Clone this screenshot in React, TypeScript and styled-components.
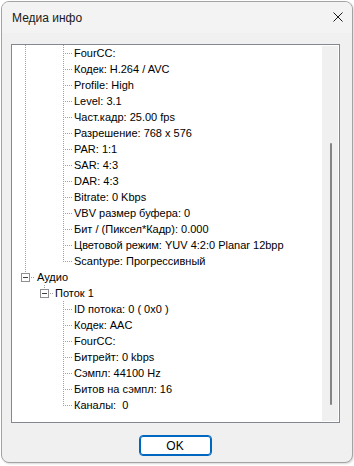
import styled, { createGlobalStyle } from 'styled-components';

type Guide = 'none' | 'line' | 'tee' | 'elbow' | 'expand';

type Row = {
  guides: Guide[];
  label: string;
};

const videoItems = [
  'FourCC:',
  'Кодек: H.264 / AVC',
  'Profile: High',
  'Level: 3.1',
  'Част.кадр: 25.00 fps',
  'Разрешение: 768 x 576',
  'PAR: 1:1',
  'SAR: 4:3',
  'DAR: 4:3',
  'Bitrate: 0 Kbps',
  'VBV размер буфера: 0',
  'Бит / (Пиксел*Кадр): 0.000',
  'Цветовой режим: YUV 4:2:0 Planar 12bpp',
  'Scantype: Прогрессивный',
];

const audioItems = [
  'ID потока: 0 ( 0x0 )',
  'Кодек: AAC',
  'FourCC:',
  'Битрейт: 0 kbps',
  'Сэмпл: 44100 Hz',
  'Битов на сэмпл: 16',
  'Каналы:  0',
];

const rows: Row[] = [
  ...videoItems.map((label, i) => ({
    guides: ['line', 'none', i < videoItems.length - 1 ? 'tee' : 'elbow'] as Guide[],
    label,
  })),
  { guides: ['expand'], label: 'Аудио' },
  { guides: ['none', 'expand'], label: 'Поток 1' },
  ...audioItems.map((label, i) => ({
    guides: ['none', 'none', i < audioItems.length - 1 ? 'tee' : 'elbow'] as Guide[],
    label,
  })),
];

const DOT = '#a0a0a0';

const GuideCell = ({ kind }: { kind: Guide }) => (
  <GuideSvg width="19" height="16" viewBox="0 0 19 16">
    {(kind === 'line' || kind === 'tee') && (
      <line x1="9.5" y1="0" x2="9.5" y2="16" stroke={DOT} strokeDasharray="1 1" />
    )}
    {kind === 'elbow' && (
      <line x1="9.5" y1="0" x2="9.5" y2="9" stroke={DOT} strokeDasharray="1 1" />
    )}
    {(kind === 'tee' || kind === 'elbow') && (
      <line x1="11" y1="8.5" x2="19" y2="8.5" stroke={DOT} strokeDasharray="1 1" />
    )}
    {kind === 'expand' && (
      <>
        <line x1="9.5" y1="0" x2="9.5" y2="4" stroke={DOT} strokeDasharray="1 1" />
        <line x1="15" y1="8.5" x2="19" y2="8.5" stroke={DOT} strokeDasharray="1 1" />
        <rect x="5.5" y="4.5" width="8" height="8" fill="#ffffff" stroke="#8f8f8f" />
        <line x1="7" y1="8.5" x2="12" y2="8.5" stroke="#404040" />
      </>
    )}
  </GuideSvg>
);

export default function App() {
  return (
    <>
      <GlobalStyle />
      <Screen>
        <Window>
          <TitleBar>
            <Title>Медиа инфо</Title>
            <CloseButton>
              <svg width="10" height="10" viewBox="0 0 10 10">
                <path d="M0.5 0.5 L9.5 9.5 M9.5 0.5 L0.5 9.5" stroke="#1a1a1a" strokeWidth="1" />
              </svg>
            </CloseButton>
          </TitleBar>
          <Body>
            <TreeBox>
              <TreeList>
                {rows.map((row, i) => (
                  <TreeRow key={i}>
                    {row.guides.map((g, j) => (
                      <GuideCell key={j} kind={g} />
                    ))}
                    <Label $root={row.guides.length === 1}>{row.label}</Label>
                  </TreeRow>
                ))}
              </TreeList>
              <ScrollTrack $before={97} $after={16}>
                <Thumb />
              </ScrollTrack>
            </TreeBox>
            <ButtonRow>
              <OkButton>OK</OkButton>
            </ButtonRow>
          </Body>
        </Window>
      </Screen>
    </>
  );
}

const GlobalStyle = createGlobalStyle`
  html, body {
    margin: 0;
    padding: 0;
    background: #ffffff;
  }
`;

const Screen = styled.div`
  width: 354px;
  height: 466px;
  padding: 1px 0 0 1px;
  box-sizing: border-box;
`;

const Window = styled.div`
  width: 352px;
  height: 462px;
  box-sizing: border-box;
  border: 1px solid #a3a3a3;
  border-radius: 8px;
  background: #f0f0f0;
  display: flex;
  flex-direction: column;
  overflow: hidden;
  box-shadow: 1px 1px 2px rgba(0, 0, 0, 0.15);
`;

const TitleBar = styled.div`
  height: 31px;
  flex: none;
  display: flex;
  align-items: center;
  justify-content: space-between;
  padding: 0 9px 0 10px;
  background: #f3f3f3;
`;

const Title = styled.span`
  font-family: 'Liberation Sans', Arial, sans-serif;
  font-size: 12px;
  color: #1a1a1a;
`;

const CloseButton = styled.div`
  width: 10px;
  height: 10px;
  display: flex;
  margin-top: -1px;
`;

const Body = styled.div`
  flex: 1;
  display: flex;
  flex-direction: column;
  padding: 11px 11px 0 9px;
`;

const TreeBox = styled.div`
  width: 329px;
  height: 379px;
  box-sizing: border-box;
  border: 1px solid #828790;
  background: #ffffff;
  display: flex;
  overflow: hidden;
`;

const TreeList = styled.div`
  flex: 1;
  display: flex;
  flex-direction: column;
  padding-left: 4px;
  overflow: hidden;
`;

const TreeRow = styled.div`
  height: 16px;
  display: flex;
  align-items: center;
  flex: none;
`;

const GuideSvg = styled.svg`
  display: block;
  flex: none;
  shape-rendering: crispEdges;
`;

const Label = styled.span<{ $root: boolean }>`
  font-family: 'Liberation Sans', Tahoma, sans-serif;
  font-size: 11px;
  line-height: 16px;
  color: #000000;
  white-space: pre;
  margin-left: ${(p) => (p.$root ? '2px' : '1px')};
`;

const ScrollTrack = styled.div<{ $before: number; $after: number }>`
  width: 16px;
  flex: none;
  margin: 1px 1px 1px 0;
  background: #f0f0f0;
  display: flex;
  justify-content: center;
  padding: ${(p) => `${p.$before}px 0 ${p.$after}px`};
  box-sizing: border-box;
`;

const Thumb = styled.div`
  width: 2px;
  border-radius: 1px;
  background: #858585;
  margin-left: 1px;
`;

const ButtonRow = styled.div`
  display: flex;
  justify-content: center;
  padding-top: 12px;
  padding-right: 2px;
`;

const OkButton = styled.button`
  width: 73px;
  height: 21px;
  box-sizing: border-box;
  border: 1px solid #0067c0;
  box-shadow: inset 0 0 0 1px #0067c0;
  border-radius: 4px;
  background: #ffffff;
  font-family: 'Liberation Sans', Tahoma, sans-serif;
  font-size: 12px;
  color: #000000;
  padding: 0;
`;
